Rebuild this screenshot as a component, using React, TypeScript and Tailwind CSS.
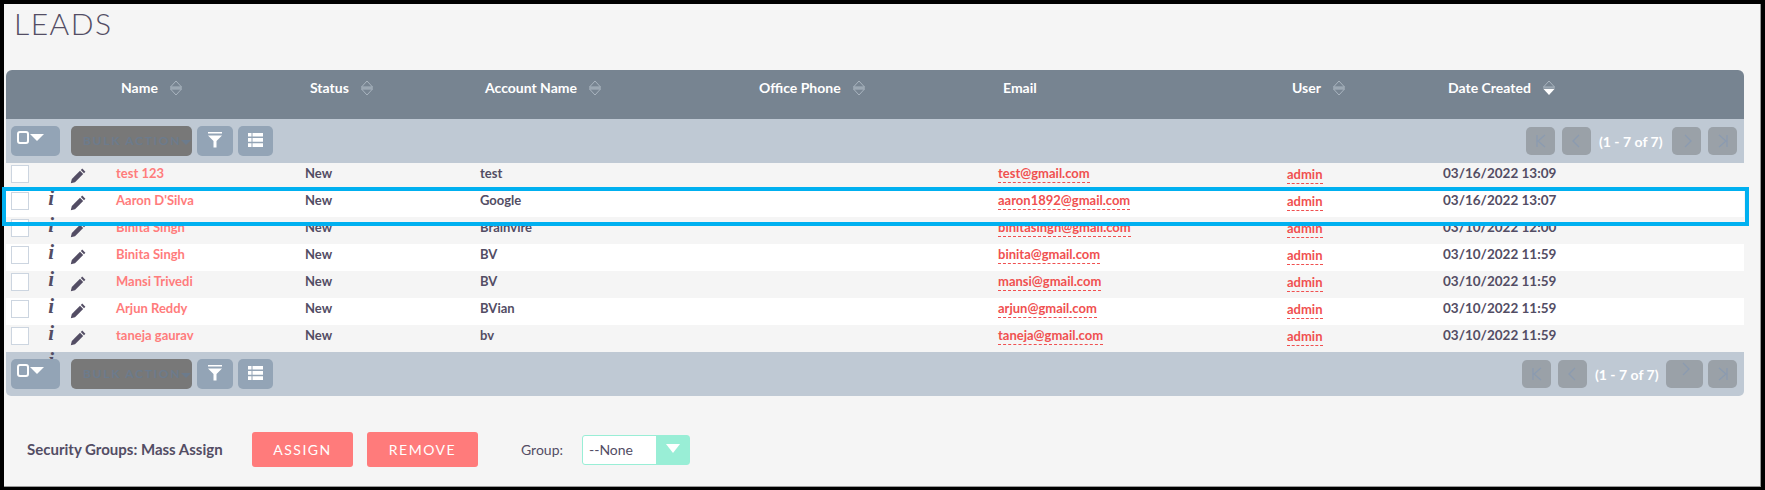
import React from "react";

const cols = "grid grid-cols-[58px_52px_189px_175px_274px_244px_289px_156px_1fr]";

const rows = [
  ["test 123", "test", "test@gmail.com", "03/16/2022 13:09"],
  ["Aaron D'Silva", "Google", "aaron1892@gmail.com", "03/16/2022 13:07"],
  ["Binita Singh", "Brainvire", "binitasingh@gmail.com", "03/10/2022 12:00"],
  ["Binita Singh", "BV", "binita@gmail.com", "03/10/2022 11:59"],
  ["Mansi Trivedi", "BV", "mansi@gmail.com", "03/10/2022 11:59"],
  ["Arjun Reddy", "BVian", "arjun@gmail.com", "03/10/2022 11:59"],
  ["taneja gaurav", "bv", "taneja@gmail.com", "03/10/2022 11:59"],
];

function Sort({ active }: { active?: boolean }) {
  return (
    <svg width="14" height="16" viewBox="0 0 14 16" className="ml-[11px] shrink-0">
      <path d="M7 1 L12.5 7 L1.5 7 Z" fill="none" stroke="#a9b4bf" strokeWidth="1" />
      <path d="M1 8 H13" stroke="#a9b4bf" strokeWidth="1" />
      {active ? (
        <path d="M1.5 9 L12.5 9 L7 15 Z" fill="#ffffff" />
      ) : (
        <path d="M1.5 9 L12.5 9 L7 15 Z" fill="none" stroke="#a9b4bf" strokeWidth="1" />
      )}
    </svg>
  );
}

function Pencil() {
  return (
    <svg width="17" height="17" viewBox="0 0 17 17" className="ml-[6px] mt-[3px]">
      <path d="M12.2 1.6 L15.4 4.8 L14 6.2 L10.8 3 Z" fill="#534d64" />
      <path d="M10 3.8 L13.2 7 L5 15.2 L0.8 16.2 L1.8 12 Z" fill="#534d64" />
    </svg>
  );
}

function SelectBtn() {
  return (
    <div className="w-[49px] h-[30px] rounded-[5px] bg-[#93a4b6] flex items-start pl-[6px] pt-[5px] gap-[1px]">
      <span className="w-[12px] h-[13px] rounded-[3px] border-[2px] border-white block" />
      <svg width="14" height="8" viewBox="0 0 14 8" className="mt-[3px]">
        <path d="M0 0 H14 L7 7 Z" fill="#fff" />
      </svg>
    </div>
  );
}

function Filter() {
  return (
    <svg width="14" height="16" viewBox="0 0 14 16">
      <path d="M0 0 H14 V1.5 H0 Z" fill="#fff" />
      <path d="M0 3.5 H14 L8.5 9 V15.5 H5.5 V9 Z" fill="#fff" />
    </svg>
  );
}

function ListIcon() {
  return (
    <svg width="15" height="14" viewBox="0 0 15 14">
      <path d="M0 0 H3.5 V3.6 H0 Z M4.5 0 H15 V3.6 H4.5 Z M0 5 H3.5 V8.8 H0 Z M4.5 5 H15 V8.8 H4.5 Z M0 10.2 H3.5 V14 H0 Z M4.5 10.2 H15 V14 H4.5 Z" fill="#fff" />
    </svg>
  );
}

function PageBtn({ d, wide, up }: { d: string; wide?: boolean; up?: boolean }) {
  return (
    <div className={wide ? "w-[37px] h-[28px] rounded-[5px] bg-[#9aa1a8] flex justify-center" : "w-[29px] h-[28px] rounded-[5px] bg-[#9aa1a8] flex justify-center"}>
      <svg width="14" height="14" viewBox="0 0 14 14" className={up ? "mt-[2px]" : "mt-[7px]"}>
        <path d={d} fill="none" stroke="#8b9bb0" strokeWidth="1.3" />
      </svg>
    </div>
  );
}

function Toolbar({ bottom }: { bottom?: boolean }) {
  return (
    <div className={bottom ? "h-[44px] bg-[#bfc9d4] rounded-b-[5px] flex items-center pl-[5px] pr-[7px]" : "h-[44px] bg-[#bfc9d4] flex items-center pl-[5px] pr-[7px]"}>
      <SelectBtn />
      <div className="ml-[11px] w-[121px] h-[30px] rounded-[5px] bg-[#787878] flex items-center pl-[12px] text-[12px] font-bold tracking-[1.7px] text-[#6c7b8c] whitespace-nowrap">
        BULK ACTION
        <svg width="10" height="6" viewBox="0 0 10 6" className="mt-[3px] shrink-0">
          <path d="M0 0 H10 L5 5 Z" fill="#6c7b8c" />
        </svg>
      </div>
      <div className="ml-[5px] w-[36px] h-[30px] rounded-[5px] bg-[#93a4b6] flex justify-center pt-[6px]"><Filter /></div>
      <div className="ml-[5px] w-[35px] h-[30px] rounded-[5px] bg-[#93a4b6] flex justify-center pt-[7px]"><ListIcon /></div>
      <div className="ml-auto flex items-center">
        <PageBtn d="M3 1 V13 M11 1 L4 7 L11 13" />
        <div className="ml-[7px]"><PageBtn d="M9 1 L3 7 L9 13" /></div>
        <span className="ml-[8px] w-[71px] text-[14px] font-bold text-white whitespace-nowrap">(1 - 7 of 7)</span>
        <div className={bottom ? "ml-0" : "ml-[2px]"}><PageBtn d="M5 1 L11 7 L5 13" wide={bottom} up={bottom} /></div>
        <div className={bottom ? "ml-[5px]" : "ml-[7px]"}><PageBtn d="M3 1 L10 7 L3 13 M11 1 V13" /></div>
      </div>
    </div>
  );
}

const headers: [string, boolean, boolean?][] = [
  ["Name", true],
  ["Status", true],
  ["Account Name", true],
  ["Office Phone", true],
  ["Email", false],
  ["User", true],
  ["Date Created", true, true],
];

export default function App() {
  return (
    <div className="relative w-[1765px] h-[490px] bg-black pl-[4px] pt-[4px] pr-[4px] pb-[3px] font-['Lato','Liberation_Sans',sans-serif] text-[#534d64]">
      <div className="h-full bg-[#f5f5f5] pl-[2px] pr-[16px] border-r border-b border-[#9a9a9a] overflow-hidden">
        <h1 className="h-[66px] pl-[8px] pt-[1px] text-[30px] leading-[36px] font-light tracking-[1.5px] text-[#534d64]">LEADS</h1>
        <div className={cols + " h-[49px] bg-[#778491] rounded-t-[6px] items-center text-[14px] font-bold text-white"}>
          <span />
          <span />
          {headers.map(([h, s, a]) => (
            <div key={h} className="flex items-center pl-[5px] whitespace-nowrap">
              {h}
              {s && <Sort active={a} />}
            </div>
          ))}
          <span />
        </div>
        <Toolbar />
        {rows.map((r, i) => (
          <div key={i} className={(i % 2 === 1 ? "bg-white " : "bg-[#f5f5f5] ") + cols + " h-[27px] items-center text-[13px] font-bold"}>
            <div className="pl-[5px]">
              <span className="block w-[18px] h-[18px] bg-white border border-[#ccd5e0]" />
            </div>
            <Pencil />
            <a className="text-[#ff7c7c]">{r[0]}</a>
            <span>New</span>
            <span>{r[1]}</span>
            <span />
            <span className="justify-self-start text-[#f05050] border-b border-dashed border-[#f05050] leading-[18px]">{r[2]}</span>
            <span className="justify-self-start text-[#f05050] border-b border-dashed border-[#f05050] leading-[18px] mt-[2px]">admin</span>
            <span className="text-[13.5px]">{r[3]}</span>
            <span className="justify-self-end pr-[10px] mt-[3px] text-[21px] leading-[22px] font-bold italic font-['Liberation_Serif',serif]">i</span>
          </div>
        ))}
        <Toolbar bottom />
        <div className="flex items-center mt-[36px] text-[14px]">
          <span className="ml-[21px] w-[225px] text-[15px] font-bold whitespace-nowrap">Security Groups: Mass Assign</span>
          <div className="w-[101px] h-[35px] rounded-[3px] bg-[#ff7b7b] flex items-center justify-center text-white text-[14px] tracking-[1.5px]">ASSIGN</div>
          <div className="ml-[14px] w-[111px] h-[35px] rounded-[3px] bg-[#ff7b7b] flex items-center justify-center text-white text-[14px] tracking-[1.5px]">REMOVE</div>
          <span className="ml-[43px] w-[61px]">Group:</span>
          <div className="w-[108px] h-[30px] rounded-[3px] border border-[#99eed6] bg-white flex items-center pl-[6px] whitespace-nowrap">
            <span className="flex-1">--None</span>
            <div className="w-[33px] h-full bg-[#99eed6] flex justify-center pt-[8px]">
              <svg width="14" height="9" viewBox="0 0 14 9"><path d="M0 0 H14 L7 9 Z" fill="#fff" /></svg>
            </div>
          </div>
        </div>
      </div>
      <div className="absolute left-[2px] top-[187px] w-[1747px] h-[39px] border-[4px] border-[#00b0f0] pointer-events-none" />
    </div>
  );
}
